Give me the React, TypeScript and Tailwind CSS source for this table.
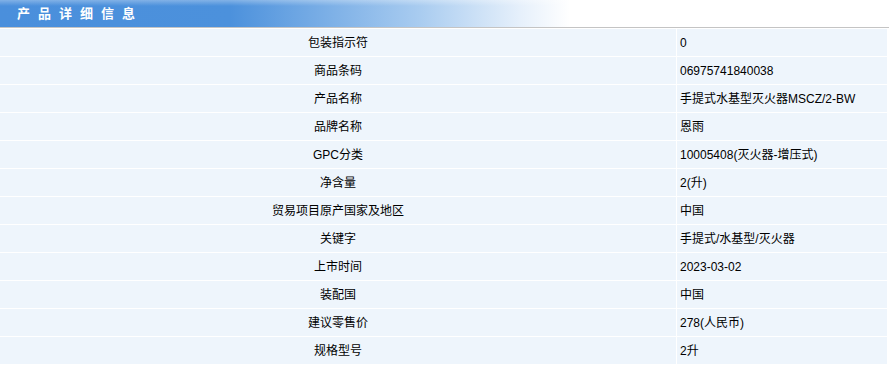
import React from 'react';

const rows: Array<[string, string]> = [
  ['包装指示符', '0'],
  ['商品条码', '06975741840038'],
  ['产品名称', '手提式水基型灭火器MSCZ/2-BW'],
  ['品牌名称', '恩雨'],
  ['GPC分类', '10005408(灭火器-增压式)'],
  ['净含量', '2(升)'],
  ['贸易项目原产国家及地区', '中国'],
  ['关键字', '手提式/水基型/灭火器'],
  ['上市时间', '2023-03-02'],
  ['装配国', '中国'],
  ['建议零售价', '278(人民币)'],
  ['规格型号', '2升'],
];

const App: React.FC = () => {
  return (
    <div
      className="w-[889px] h-[365px] bg-white text-black text-[12px] overflow-hidden"
      style={{ fontFamily: '"Liberation Sans", "Noto Sans CJK SC", sans-serif' }}
    >
      {/* title bar */}
      <div className="relative h-[27px] bg-[linear-gradient(to_right,#4a8fdc_0px,#4c91dc_230px,#a9ccf0_420px,#e6f0fb_520px,#ffffff_570px)]">
        <div className="absolute inset-x-0 top-0 h-[6px] bg-[linear-gradient(to_bottom,rgba(255,255,255,0.3),rgba(255,255,255,0))]" />
        <div className="relative h-full flex items-center pl-[17px] text-white font-bold text-[13px] tracking-[8px]">
          产品详细信息
        </div>
      </div>
      <div className="h-px bg-[#c4c4c4]" />

      {/* detail table */}
      <div className="flex flex-col gap-px pt-px pr-[2px]">
        {rows.map(([label, value]) => (
          <div key={label} className="flex gap-px h-[27px]">
            <div className="w-[676px] bg-[#eef5fc] flex items-center justify-center">{label}</div>
            <div className="flex-1 bg-[#eef5fc] flex items-center pl-[3px]">{value}</div>
          </div>
        ))}
      </div>
    </div>
  );
};

export default App;
